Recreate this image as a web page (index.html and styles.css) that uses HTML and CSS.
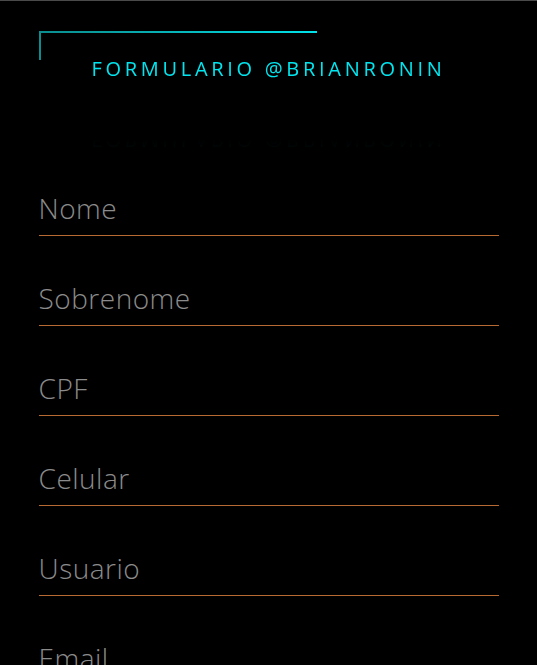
FILE: index.html
```html
<!DOCTYPE html>
<html lang="pt">
<head>
<meta charset="utf-8">
<title>Formulario</title>
<link rel="stylesheet" href="styles.css">
</head>
<body>
<main class="wrap">
  <header class="head">
    <h1 class="title">FORMULARIO @BRIANRONIN</h1>
  </header>
  <form class="form">
    <div class="field"><span class="label">Nome</span></div>
    <div class="field"><span class="label">Sobrenome</span></div>
    <div class="field"><span class="label">CPF</span></div>
    <div class="field"><span class="label">Celular</span></div>
    <div class="field"><span class="label">Usuario</span></div>
    <div class="field"><span class="label">Email</span></div>
  </form>
</main>
</body>
</html>
```
FILE: styles.css
```css
html, body {
  margin: 0;
  padding: 0;
  background: #000;
}
body {
  border-top: 1px solid #4a4a4a;
  font-family: "Open Sans", "Liberation Sans", sans-serif;
  overflow: hidden;
  height: 664px;
}
.wrap {
  width: 460px;
  margin: 0 auto;
  padding-top: 30px;
}
.head {
  position: relative;
}
.head::before {
  content: "";
  position: absolute;
  left: 0;
  top: 0;
  width: 276px;
  height: 27px;
  border-top: 2px solid #00d8e0;
  border-left: 2px solid #0aa3a6;
  border-image: linear-gradient(90deg, #0a8e90 0%, #0a9a9c 18%, #00e2ea 100%) 1;
}
.title {
  margin: 0;
  padding-top: 25px;
  font-weight: 400;
  font-size: 20px;
  line-height: 26px;
  letter-spacing: 3.7px;
  color: #00e6f0;
  text-align: center;
  -webkit-box-reflect: below 45px linear-gradient(to bottom, rgba(0,0,0,0.14), transparent 75%);
}
.form {
  margin-top: 107px;
}
.field {
  border-bottom: 1px solid #b86a33;
  padding-bottom: 8px;
  margin-bottom: 43px;
}
.label {
  display: block;
  font-weight: 300;
  font-size: 28px;
  line-height: 38px;
  letter-spacing: 0.5px;
  color: #8b8b8b;
}
```
